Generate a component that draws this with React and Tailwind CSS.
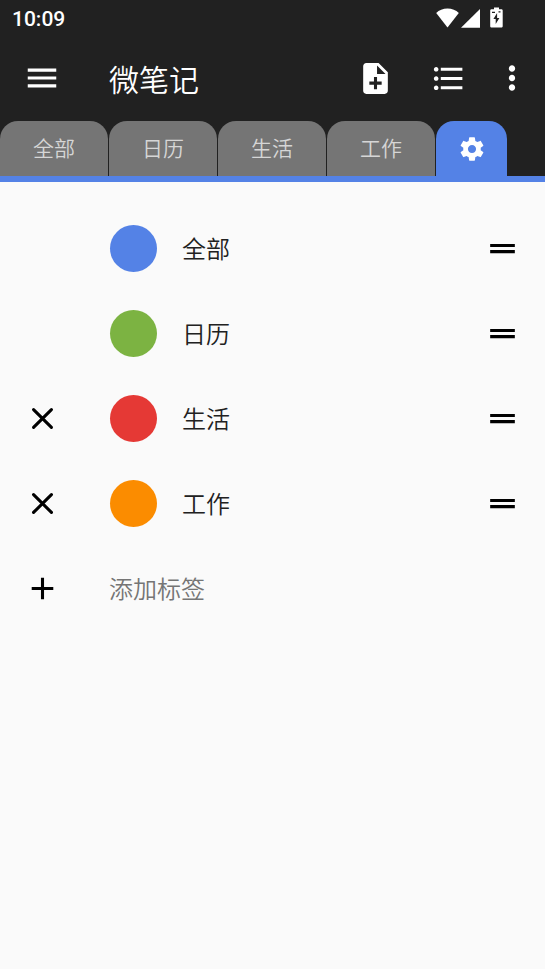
import { useState } from 'react';

const TABS = [
  { id: 'all', label: '全部', color: 'bg-[#5482e6]' },
  { id: 'calendar', label: '日历', color: 'bg-[#7cb342]' },
  { id: 'life', label: '生活', color: 'bg-[#e53935]', removable: true },
  { id: 'work', label: '工作', color: 'bg-[#fb8c00]', removable: true },
];

function Icon({ d, className = 'size-[37px]' }) {
  return (
    <svg viewBox="0 0 24 24" fill="currentColor" aria-hidden="true" className={`shrink-0 ${className}`}>
      <path d={d} />
    </svg>
  );
}

const ICONS = {
  menu: 'M3 18h18v-2H3v2zm0-5h18v-2H3v2zm0-7v2h18V6H3z',
  noteAdd: 'M14 2H6c-1.1 0-1.99.9-1.99 2L4 20c0 1.1.89 2 1.99 2H18c1.1 0 2-.9 2-2V8l-6-6zm2 14h-3v3h-2v-3H8v-2h3v-3h2v3h3v2zm-3-7V3.5L18.5 9H13z',
  list: 'M4 10.5c-.83 0-1.5.67-1.5 1.5s.67 1.5 1.5 1.5 1.5-.67 1.5-1.5-.67-1.5-1.5-1.5zm0-6c-.83 0-1.5.67-1.5 1.5S3.17 7.5 4 7.5 5.5 6.83 5.5 6 4.83 4.5 4 4.5zm0 12c-.83 0-1.5.67-1.5 1.5s.67 1.5 1.5 1.5 1.5-.67 1.5-1.5-.67-1.5-1.5-1.5zM7 19h14v-2H7v2zm0-6h14v-2H7v2zm0-8v2h14V5H7z',
  more: 'M12 8c1.1 0 2-.9 2-2s-.9-2-2-2-2 .9-2 2 .9 2 2 2zm0 2c-1.1 0-2 .9-2 2s.9 2 2 2 2-.9 2-2-.9-2-2-2zm0 6c-1.1 0-2 .9-2 2s.9 2 2 2 2-.9 2-2-.9-2-2-2z',
  settings: 'M19.43 12.98c.04-.32.07-.64.07-.98s-.03-.66-.07-.98l2.11-1.65c.19-.15.24-.42.12-.64l-2-3.46c-.12-.22-.39-.3-.61-.22l-2.49 1c-.52-.4-1.08-.73-1.69-.98l-.38-2.65C14.46 2.18 14.25 2 14 2h-4c-.25 0-.46.18-.49.42l-.38 2.65c-.61.25-1.17.59-1.69.98l-2.49-1c-.23-.09-.49 0-.61.22l-2 3.46c-.13.22-.07.49.12.64l2.11 1.65c-.04.32-.07.65-.07.98s.03.66.07.98l-2.11 1.65c-.19.15-.24.42-.12.64l2 3.46c.12.22.39.3.61.22l2.49-1c.52.4 1.08.73 1.69.98l.38 2.65c.03.24.24.42.49.42h4c.25 0 .46-.18.49-.42l.38-2.65c.61-.25 1.17-.59 1.69-.98l2.49 1c.23.09.49 0 .61-.22l2-3.46c.12-.22.07-.49-.12-.64l-2.11-1.65zM12 15.5c-1.93 0-3.5-1.57-3.5-3.5s1.57-3.5 3.5-3.5 3.5 1.57 3.5 3.5-1.57 3.5-3.5 3.5z',
  add: 'M19 13h-6v6h-2v-6H5v-2h6V5h2v6h6v2z',
  drag: 'M20 9H4v2h16V9zM4 15h16v-2H4v2z',
};

function StatusBar() {
  return (
    <div className="flex h-9 items-center justify-between pr-[41px] pl-3">
      <span className="pt-0.5 font-['Roboto',sans-serif] text-[21px] leading-9 font-medium">10:09</span>
      <svg viewBox="0 0 68 22" fill="currentColor" aria-hidden="true" className="h-[22px] w-[68px]">
        <path d="M11.500 20.500 0.200 6C3 3.200 7 1.500 11.500 1.500s8.500 1.700 11.300 4.500z" />
        <path d="M44 20.800V2L25 20.800z" />
        <path
          fillRule="evenodd"
          d="M58 0.500h5v1.800h2.200c.8 0 1.500.5 1.500 1.300v15.700c0 .8-.7 1.300-1.500 1.300h-9.500c-.8 0-1.500-.5-1.500-1.300V3.600c0-.8.700-1.300 1.500-1.300h2.300zM61.100 6l-3.700 6h2.300v5l3.700-6h-2.300zM56 4.700v1.300h3V4.700zM62.500 4.200v1.300h2V4.200z"
        />
      </svg>
    </div>
  );
}

function Toolbar() {
  return (
    <header className="flex h-[85px] items-center pr-[14px] pb-px pl-[23px]">
      <button type="button" aria-label="菜单">
        <Icon d={ICONS.menu} className="size-[38px]" />
      </button>
      <h1 className="ml-12 flex-1 text-[30px] leading-9">微笔记</h1>
      <button type="button" aria-label="新建笔记">
        <Icon d={ICONS.noteAdd} />
      </button>
      <button type="button" aria-label="列表" className="ml-9">
        <Icon d={ICONS.list} />
      </button>
      <button type="button" aria-label="更多" className="ml-[26px]">
        <Icon d={ICONS.more} className="size-[38px]" />
      </button>
    </header>
  );
}

function TabBar({ active, onSelect }) {
  return (
    <nav className="flex gap-px border-b-6 border-[#5482e6]">
      {TABS.map((tab) => (
        <button
          key={tab.id}
          type="button"
          onClick={() => onSelect(tab.id)}
          className={`h-[55px] w-[108px] rounded-t-[18px] pb-0.5 text-[21px] leading-none ${
            active === tab.id ? 'bg-[#5482e6] text-white' : 'bg-[#757575] text-[#d6d6d6]'
          }`}
        >
          {tab.label}
        </button>
      ))}
      <button
        type="button"
        aria-label="设置"
        onClick={() => onSelect('settings')}
        className={`flex h-[55px] w-[71px] items-center justify-center rounded-t-[18px] ${
          active === 'settings' ? 'bg-[#5482e6]' : 'bg-[#757575]'
        }`}
      >
        <Icon d={ICONS.settings} className="size-7" />
      </button>
    </nav>
  );
}

function TagRow({ tag, onRemove }) {
  return (
    <li className="flex h-[85px] items-center pr-6">
      <div className="flex w-[110px] shrink-0 pl-6">
        {tag.removable && (
          <button type="button" aria-label={`删除${tag.label}`} onClick={() => onRemove(tag.id)}>
            <svg viewBox="0 0 24 24" fill="none" stroke="currentColor" strokeWidth="2" strokeLinecap="round" className="size-[37px]">
              <path d="M6.200 6.200l11.600 11.600M17.800 6.200L6.200 17.800" />
            </svg>
          </button>
        )}
      </div>
      <button type="button" aria-label={`${tag.label}颜色`} className={`size-[47px] shrink-0 rounded-full ${tag.color}`} />
      <span className="ml-[25px] flex-1 pb-0.5 text-2xl text-[#212121]">{tag.label}</span>
      <button type="button" aria-label={`移动${tag.label}`} className="cursor-grab">
        <Icon d={ICONS.drag} />
      </button>
    </li>
  );
}

export default function App() {
  const [active, setActive] = useState('settings');
  const [tags, setTags] = useState(TABS);

  const removeTag = (id) => setTags((prev) => prev.filter((t) => t.id !== id));

  return (
    <div className="min-h-screen bg-[#fafafa] font-['Noto_Sans_CJK_SC',sans-serif]">
      <div className="bg-[#212121] font-[350] text-white">
        <StatusBar />
        <Toolbar />
        <TabBar active={active} onSelect={setActive} />
      </div>

      <main className="pt-6 font-[350] text-black">
        <ul>
          {tags.map((tag) => (
            <TagRow key={tag.id} tag={tag} onRemove={removeTag} />
          ))}
        </ul>
        <label className="flex h-[85px] items-center pr-6">
          <span className="flex w-[109px] shrink-0 pl-6">
            <Icon d={ICONS.add} />
          </span>
          <input
            type="text"
            aria-label="添加标签"
            placeholder="添加标签"
            className="min-w-0 flex-1 bg-transparent pb-0.5 text-2xl outline-none placeholder:text-[#757575]"
          />
        </label>
      </main>
    </div>
  );
}
